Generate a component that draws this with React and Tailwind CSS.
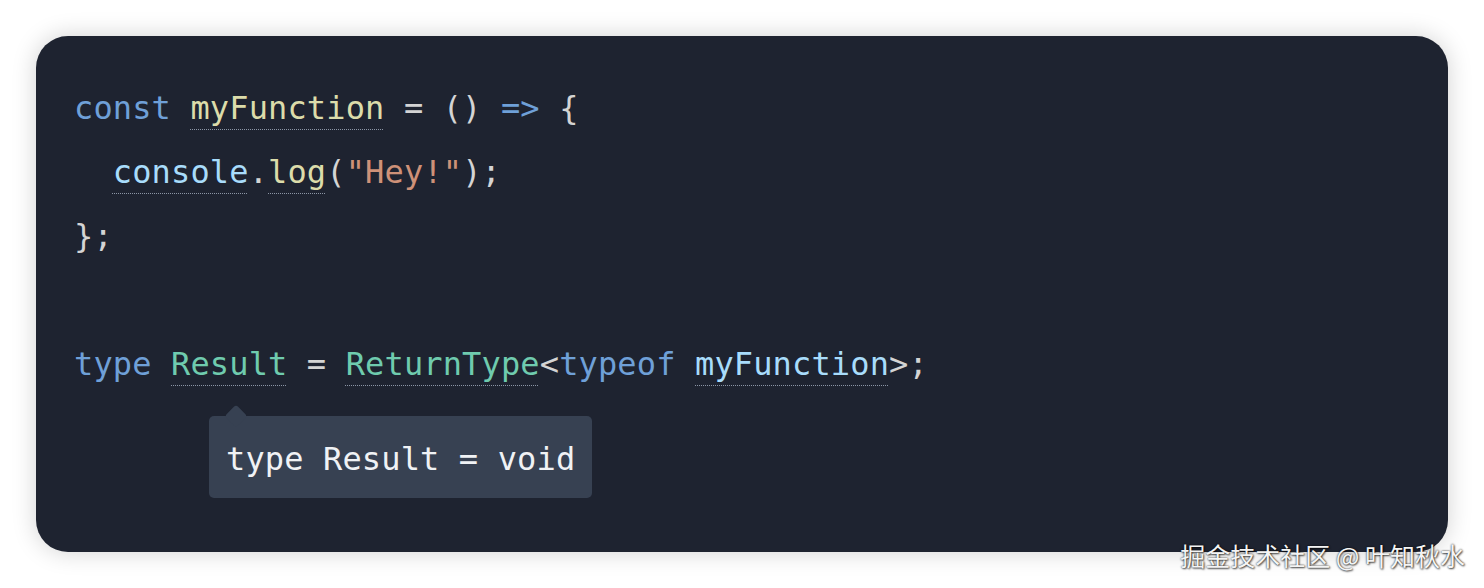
export default function App() {
  const mono = { fontFamily: '"DejaVu Sans Mono", "Liberation Mono", monospace' };
  const u = "underline decoration-dotted decoration-[#8b95a5] decoration-1 underline-offset-[10px]";
  return (
    <div className="relative w-[1484px] h-[588px] bg-white p-[36px]">
      <div
        className="relative h-[516px] rounded-[32px] bg-[#1e2330] pl-[38px] pt-[40px] text-[32px] tracking-[0.14px] leading-[64px] text-[#d4d4d4] shadow-[0_0_24px_rgba(0,0,0,0.18)]"
        style={mono}
      >
        <div className="whitespace-pre">
          <span className="text-[#6fa0d8]">const</span> <span className={`text-[#dcdcaa] ${u}`}>myFunction</span> = () <span className="text-[#6fa0d8]">=&gt;</span> {"{"}
        </div>
        <div className="whitespace-pre">
          {"  "}<span className={`text-[#a8dcfb] ${u}`}>console</span>.<span className={`text-[#dcdcaa] ${u}`}>log</span>(<span className="text-[#ce9178]">"Hey!"</span>);
        </div>
        <div className="whitespace-pre">{"};"}</div>
        <div className="h-[64px]"></div>
        <div className="whitespace-pre">
          <span className="text-[#6fa0d8]">type</span> <span className={`text-[#6fcbae] ${u}`}>Result</span> = <span className={`text-[#6fcbae] ${u}`}>ReturnType</span>&lt;<span className="text-[#6fa0d8]">typeof</span> <span className={`text-[#a8dcfb] ${u}`}>myFunction</span>&gt;;
        </div>
        <div className="relative ml-[135px] mt-[20px] w-[383px] h-[82px] rounded-[5px] bg-[#374152] px-[17px] text-[#f0f2f5] leading-[86px] whitespace-pre">
          <div className="absolute left-[19px] top-[-8px] w-[16px] h-[16px] rotate-45 rounded-[3px] bg-[#374152]"></div>
          <span className="relative">type Result = void</span>
        </div>
      </div>
      <div
        className="absolute right-[19px] bottom-[18px] text-[25px] leading-[30px] text-[#f4f4f4] [text-shadow:0_0_2px_rgba(0,0,0,0.9),1px_1px_2px_rgba(0,0,0,0.6)]"
        style={{ fontFamily: '"Noto Sans CJK SC", "Noto Sans", sans-serif' }}
      >
        掘金技术社区 @ 叶知秋水
      </div>
    </div>
  );
}
